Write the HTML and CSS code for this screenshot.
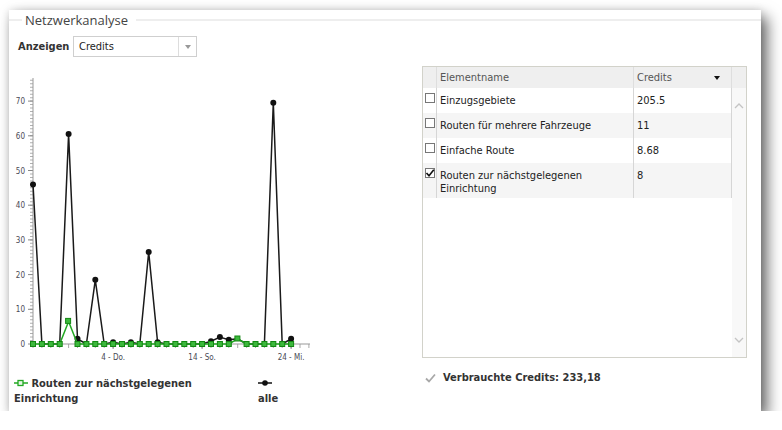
FILE: index.html
```html
<!DOCTYPE html>
<html lang="de">
<head>
    <meta charset="UTF-8">
    <title>Netzwerkanalyse</title>
    <link rel="stylesheet" href="styles.css">
</head>
<body>
    <div class="panel">
        <div class="panel-title"><span>Netzwerkanalyse</span></div>

        <div class="toolbar">
            <span class="toolbar-label">Anzeigen</span>
            <div class="select">
                <span class="select-value">Credits</span>
                <span class="select-arrow"></span>
            </div>
        </div>

        <div class="content">
            <div class="chart-col">
                <svg class="chart" width="320" height="306" viewBox="9 62 320 306">
                    <defs>
                        <rect id="sq" width="5" height="5" fill="#3cb83c" stroke="#138813" stroke-width="1"/>
                    </defs>
                    <!-- achsen -->
                    <line x1="31.5" y1="344.5" x2="31.5" y2="78" stroke="#b0b0b0" stroke-width="3" stroke-dasharray="1 2.47"/>
                    <path d="M28 344H33M28 309.3H33M28 274.6H33M28 239.9H33M28 205.2H33M28 170.5H33M28 135.8H33M28 101.1H33" stroke="#888" stroke-width="1"/>
                    <line x1="33" y1="78" x2="33" y2="344.5" stroke="#999" stroke-width="1"/>
                    <line x1="32.5" y1="346" x2="310" y2="346" stroke="#aaa" stroke-width="4" stroke-dasharray="1 7.9"/>
                    <path d="M113.1 344V349M202.1 344V349M291.1 344V349" stroke="#888" stroke-width="1"/>
                    <line x1="33" y1="344" x2="310" y2="344" stroke="#999" stroke-width="1"/>

                    <g class="axis-label" text-anchor="end">
                        <text x="25" y="347">0</text>
                        <text x="25" y="312.3">10</text>
                        <text x="25" y="277.6">20</text>
                        <text x="25" y="242.9">30</text>
                        <text x="25" y="208.2">40</text>
                        <text x="25" y="173.5">50</text>
                        <text x="25" y="138.8">60</text>
                        <text x="25" y="104.1">70</text>
                    </g>
                    <g class="axis-label" text-anchor="middle">
                        <text x="113.1" y="360">4 - Do.</text>
                        <text x="202.1" y="360">14 - So.</text>
                        <text x="291.1" y="360">24 - Mi.</text>
                    </g>

                    <!-- serie: alle -->
                    <polyline fill="none" stroke="#1a1a1a" stroke-width="1.5" stroke-linejoin="round"
                        points="33,184.4 41.9,344 50.8,344 59.7,344 68.6,134.1 77.5,338.8 86.4,344 95.3,279.8 104.2,344 113.1,342.3 122,344 130.9,342.3 139.8,344 148.7,252 157.6,342.3 166.5,344 175.4,344 184.3,344 193.2,344 202.1,344 211,341.2 219.9,337.1 228.8,339.8 237.7,338.8 246.6,344 255.5,344 264.4,344 273.3,102.8 282.2,344 291.1,338.8"/>
                    <g fill="#111">
                        <circle cx="33" cy="184.4" r="3"/>
                        <circle cx="68.6" cy="134.1" r="3"/>
                        <circle cx="77.5" cy="338.8" r="3"/>
                        <circle cx="95.3" cy="279.8" r="3"/>
                        <circle cx="113.1" cy="342.3" r="3"/>
                        <circle cx="130.9" cy="342.3" r="3"/>
                        <circle cx="148.7" cy="252" r="3"/>
                        <circle cx="157.6" cy="342.3" r="3"/>
                        <circle cx="211" cy="341.2" r="3"/>
                        <circle cx="219.9" cy="337.1" r="3"/>
                        <circle cx="228.8" cy="339.8" r="3"/>
                        <circle cx="273.3" cy="102.8" r="3"/>
                        <circle cx="291.1" cy="338.8" r="3"/>
                    </g>

                    <!-- serie: routen zur naechstgelegenen einrichtung -->
                    <polyline fill="none" stroke="#22a822" stroke-width="1.5" stroke-linejoin="round"
                        points="33,344 59.7,344 68.6,321.4 77.5,344 228.8,344 237.7,338.8 246.6,344 291.1,344"/>
                    <use href="#sq" x="30.5" y="341.5"/>
                    <use href="#sq" x="39.4" y="341.5"/>
                    <use href="#sq" x="48.3" y="341.5"/>
                    <use href="#sq" x="57.2" y="341.5"/>
                    <use href="#sq" x="65.6" y="318.4" width="6" height="6"/>
                    <use href="#sq" x="75" y="341.5"/>
                    <use href="#sq" x="83.9" y="341.5"/>
                    <use href="#sq" x="92.8" y="341.5"/>
                    <use href="#sq" x="101.7" y="341.5"/>
                    <use href="#sq" x="110.6" y="341.5"/>
                    <use href="#sq" x="119.5" y="341.5"/>
                    <use href="#sq" x="128.4" y="341.5"/>
                    <use href="#sq" x="137.3" y="341.5"/>
                    <use href="#sq" x="146.2" y="341.5"/>
                    <use href="#sq" x="155.1" y="341.5"/>
                    <use href="#sq" x="164" y="341.5"/>
                    <use href="#sq" x="172.9" y="341.5"/>
                    <use href="#sq" x="181.8" y="341.5"/>
                    <use href="#sq" x="190.7" y="341.5"/>
                    <use href="#sq" x="199.6" y="341.5"/>
                    <use href="#sq" x="208.5" y="341.5"/>
                    <use href="#sq" x="217.4" y="341.5"/>
                    <use href="#sq" x="226.3" y="341.5"/>
                    <use href="#sq" x="234.9" y="336"/>
                    <use href="#sq" x="244.1" y="341.5"/>
                    <use href="#sq" x="253" y="341.5"/>
                    <use href="#sq" x="261.9" y="341.5"/>
                    <use href="#sq" x="270.8" y="341.5"/>
                    <use href="#sq" x="279.7" y="341.5"/>
                    <use href="#sq" x="288.6" y="341.5"/>
                </svg>

                <div class="chart-legend">
                    <div class="legend-item first">
                        <div class="legend-text">
                            <svg class="marker" width="14" height="8" viewBox="0 0 14 8">
                                <line x1="0" y1="4" x2="14" y2="4" stroke="#22a822" stroke-width="1.5"/>
                                <rect x="4" y="1.5" width="5" height="5" fill="#e6f6e6" stroke="#22a822" stroke-width="1.3"/>
                            </svg>
                            Routen zur nächstgelegenen Einrichtung
                        </div>
                    </div>
                    <div class="legend-item">
                        <svg class="marker" width="14" height="8" viewBox="0 0 14 8">
                            <line x1="0" y1="4" x2="14" y2="4" stroke="#111" stroke-width="1.5"/>
                            <circle cx="7" cy="4" r="2.8" fill="#111"/>
                        </svg><br>
                        alle
                    </div>
                </div>
            </div>

            <div class="grid-col">
                <div class="grid">
                    <div class="grid-head">
                        <div class="hcell"></div>
                        <div class="hcell">Elementname</div>
                        <div class="hcell sortable">Credits <span class="sort-arrow"></span></div>
                        <div class="hcell"></div>
                    </div>
                    <div class="grid-body">
                        <div class="rows">
                            <div class="row">
                                <div class="cell check"><span class="cb"></span></div>
                                <div class="cell">Einzugsgebiete</div>
                                <div class="cell num">205.5</div>
                            </div>
                            <div class="row alt">
                                <div class="cell check"><span class="cb"></span></div>
                                <div class="cell">Routen für mehrere Fahrzeuge</div>
                                <div class="cell num">11</div>
                            </div>
                            <div class="row">
                                <div class="cell check"><span class="cb"></span></div>
                                <div class="cell">Einfache Route</div>
                                <div class="cell num">8.68</div>
                            </div>
                            <div class="row alt">
                                <div class="cell check">
                                    <span class="cb">
                                        <svg width="10" height="10" viewBox="0 0 10 10"><path d="M1.5 5L4 7.8L8.8 1.8" fill="none" stroke="#111" stroke-width="1.6"/></svg>
                                    </span>
                                </div>
                                <div class="cell">Routen zur nächstgelegenen Einrichtung</div>
                                <div class="cell num">8</div>
                            </div>
                        </div>
                        <div class="scrollbar">
                            <svg width="10" height="6" viewBox="0 0 10 6"><path d="M1 5L5 1L9 5" fill="none" stroke="#c4c4c4" stroke-width="1.3"/></svg>
                            <svg width="10" height="6" viewBox="0 0 10 6"><path d="M1 1L5 5L9 1" fill="none" stroke="#c4c4c4" stroke-width="1.3"/></svg>
                        </div>
                    </div>
                </div>

                <div class="total">
                    <svg width="11" height="10" viewBox="0 0 11 10"><path d="M1 5.5L4 8.5L10 1.5" fill="none" stroke="#a8a8a8" stroke-width="1.8"/></svg>
                    <span>Verbrauchte Credits: 233,18</span>
                </div>
            </div>
        </div>
    </div>
</body>
</html>
```

FILE: styles.css
```css
* {
    margin: 0;
    padding: 0;
    box-sizing: border-box;
}

body {
    font-family: "DejaVu Sans Condensed", "Liberation Sans", sans-serif;
    font-size: 11px;
    color: #222;
    background: #fff;
}

.panel {
    margin: 10px 0 0 9px;
    width: 752px;
    height: 401px;
    background: white;
    box-shadow: 6px 7px 14px rgba(0,0,0,0.6), 0 0 8px rgba(0,0,0,0.12);
}

/* titel wie fieldset legend */
.panel-title {
    display: flex;
    align-items: center;
    height: 20px;
    font-family: "Open Sans", "Liberation Sans", sans-serif;
    font-size: 13px;
    color: #444;
}

.panel-title::before,
.panel-title::after {
    content: "";
    border-top: 2px solid #eeeeee;
}

.panel-title::before {
    width: 13px;
}

.panel-title::after {
    flex: 1;
}

.panel-title span {
    padding: 0 8px 0 3px;
}

.toolbar {
    display: flex;
    align-items: center;
    margin-top: 6px;
    padding-left: 9px;
}

.toolbar-label {
    width: 55px;
    font-weight: bold;
    color: #333;
}

.select {
    display: flex;
    width: 124px;
    height: 21px;
    border: 1px solid #cfcfcf;
}

.select-value {
    flex: 1;
    padding-left: 5px;
    line-height: 19px;
}

.select-arrow {
    width: 18px;
    border-left: 1px solid #ddd;
    display: flex;
    align-items: center;
    justify-content: center;
}

.select-arrow::after {
    content: "";
    border-left: 3.5px solid transparent;
    border-right: 3.5px solid transparent;
    border-top: 4px solid #999;
}

.content {
    display: flex;
    margin-top: 5px;
}

.chart-col {
    width: 413px;
}

.chart {
    display: block;
}

.axis-label {
    font-family: "DejaVu Sans Condensed", "Liberation Sans", sans-serif;
    font-size: 8px;
    fill: #4a4a55;
}

.chart-legend {
    display: flex;
    margin-top: 8px;
    padding-left: 5px;
    font-weight: bold;
    line-height: 15px;
    color: #333;
}

.legend-item.first {
    width: 244px;
}

.legend-text {
    width: 190px;
}

.marker {
    vertical-align: middle;
    margin-top: -2px;
}

.grid-col {
    padding-top: 4px;
}

.grid {
    display: flex;
    flex-direction: column;
    width: 325px;
    height: 292px;
    border: 1px solid #d2d2ca;
}

.grid-head {
    display: grid;
    grid-template-columns: 13px 197px 98px 1fr;
    height: 21px;
    background: #efefef;
    color: #555;
}

.hcell {
    line-height: 21px;
    padding-left: 3px;
}

.hcell + .hcell {
    border-left: 1px solid #dedede;
}

.hcell.sortable {
    display: flex;
    justify-content: space-between;
    align-items: center;
    padding-right: 11px;
}

.sort-arrow {
    border-left: 3.5px solid transparent;
    border-right: 3.5px solid transparent;
    border-top: 4px solid #111;
}

.grid-body {
    flex: 1;
    display: flex;
}

.rows {
    width: 309px;
}

.row {
    display: grid;
    grid-template-columns: 13px 197px 99px;
    min-height: 25px;
}

.row.alt {
    background: #f5f5f5;
}

.cell {
    padding: 6px 3px 3px;
    line-height: 13px;
}

.cell + .cell {
    border-left: 1px solid #d6d6d6;
}

.cell.num {
    border-right: 1px solid #d6d6d6;
}

.cell.check {
    padding: 5px 0 0 2px;
}

.cb {
    display: block;
    width: 10px;
    height: 10px;
    border: 1px solid #777;
    background: #fff;
}

.cb svg {
    display: block;
    margin: -1px 0 0 -1px;
}

.scrollbar {
    flex: 1;
    display: flex;
    flex-direction: column;
    justify-content: space-between;
    align-items: center;
    padding: 15px 0 14px;
    background: #f8f8f8;
}

.scrollbar svg {
    display: block;
}

.total {
    display: flex;
    align-items: center;
    gap: 7px;
    margin-top: 12px;
    padding-left: 3px;
    line-height: 15px;
    font-weight: bold;
    color: #333;
}
```
